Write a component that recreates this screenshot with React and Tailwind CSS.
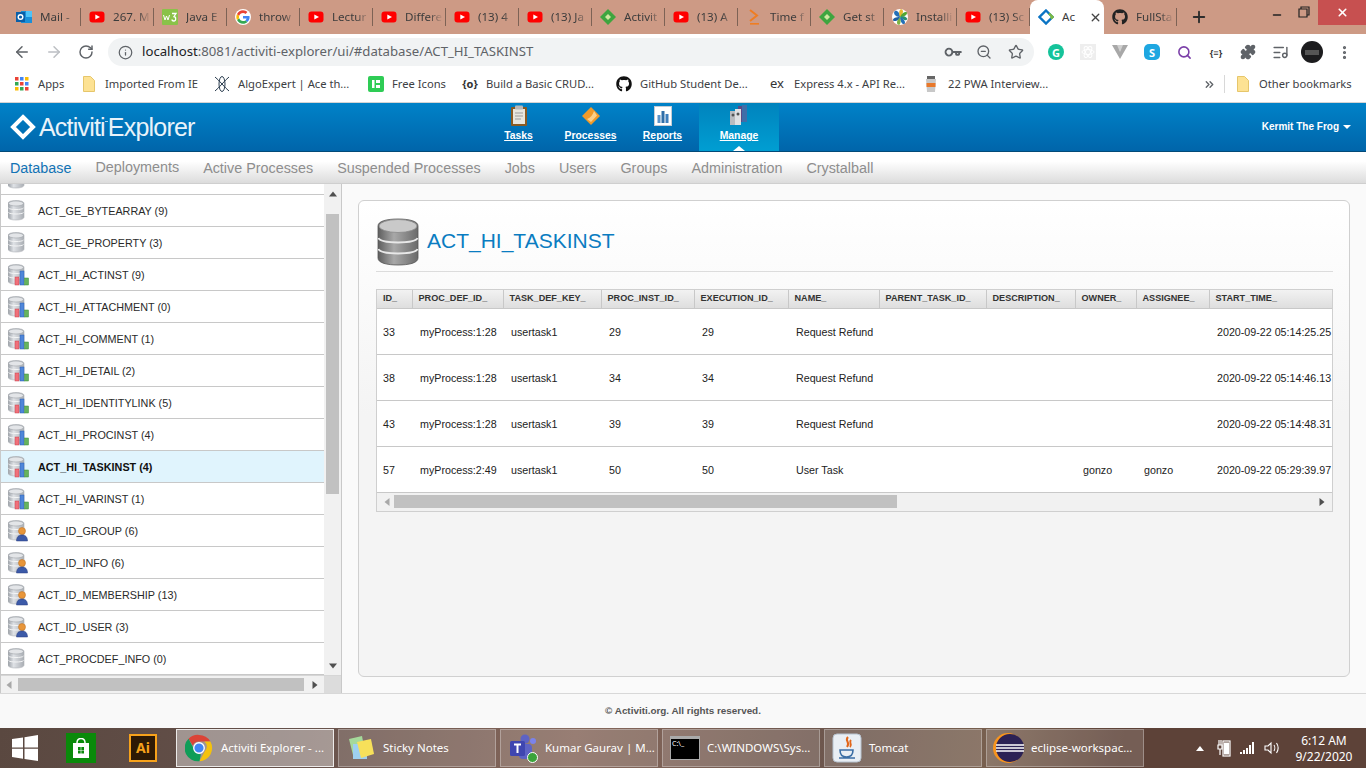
import React from 'react';
import { ArrowLeft, ArrowRight, RotateCw, Info, Key, ZoomOut, Star, Plus, X, Minus, EllipsisVertical, ListMusic, Search, ChevronsRight, Puzzle } from 'lucide-react';
import { FaGithub } from 'react-icons/fa';

const UI = 'font-["Noto_Sans",sans-serif]';

const YT = () => (
  <svg width="16" height="16" viewBox="0 0 16 16"><rect x="0.5" y="2.5" width="15" height="11" rx="3" fill="#f00" /><path d="M6.3 5.4 11 8l-4.700 2.600z" fill="#fff" /></svg>
);
const Outlook = () => (
  <svg width="16" height="16" viewBox="0 0 16 16"><rect x="5" y="2" width="11" height="12" fill="#1a8fd8" /><rect x="10" y="2" width="6" height="6" fill="#4fc3f7" /><rect x="0" y="3" width="9" height="10" fill="#0a5fa8" /><circle cx="4.500" cy="8" r="2.300" fill="none" stroke="#fff" strokeWidth="1.400" /></svg>
);
const W3 = () => (
  <svg width="16" height="16" viewBox="0 0 16 16"><rect width="16" height="16" rx="1" fill="#8ac249" /><path d="M1.500 6 3 11l1.500-4L6 11l1.500-5" fill="none" stroke="#fff" strokeWidth="1" /><path d="M10 4.500h4l-2 3c2 0 2.500 4.500-.2 4.500-1 0-1.800-.5-2-1.500" fill="none" stroke="#fff" strokeWidth="1.300" /></svg>
);
const GoogleG = () => (
  <svg width="16" height="16" viewBox="0 0 16 16">
    <circle cx="8" cy="8" r="8" fill="#fff" />
    <path d="M14.600 8.200c0-.5-.1-.9-.2-1.300H8v2.500h3.600c-.2.800-.6 1.500-1.300 2l2.100 1.600c1.300-1.100 2.200-2.800 2.200-4.800z" fill="#4285f4" />
    <path d="M8 14.800c1.800 0 3.400-.6 4.400-1.800l-2.100-1.600c-.6.400-1.300.7-2.300.7-1.800 0-3.300-1.200-3.800-2.800L2 10.900c1.100 2.300 3.400 3.900 6 3.900z" fill="#34a853" />
    <path d="M4.200 9.300c-.3-.8-.3-1.800 0-2.600L2 5.100c-.9 1.800-.9 4 0 5.800z" fill="#fbbc05" />
    <path d="M8 3.900c1 0 1.900.3 2.500 1l1.900-1.900C11.300 2 9.800 1.200 8 1.200c-2.600 0-4.900 1.600-6 3.900l2.200 1.600C4.700 5.100 6.200 3.900 8 3.900z" fill="#ea4335" />
  </svg>
);
const GreenDiamond = () => (
  <svg width="16" height="16" viewBox="0 0 16 16"><path d="M8 0 16 8l-5 5-3 3-8-8z" fill="#3fa53f" /><path d="M5 8l3-3 3 3-3 3z" fill="#cfe8a0" /></svg>
);
const TimeIcon = () => (
  <svg width="16" height="16" viewBox="0 0 16 16"><path d="M4 1l7 5.500L4 12" fill="none" stroke="#ef7d22" strokeWidth="2" /><rect x="4" y="14" width="9" height="1.600" fill="#ef7d22" /></svg>
);
const Pinwheel = () => (
  <svg width="16" height="16" viewBox="0 0 16 16"><circle cx="8" cy="8" r="8" fill="#fff" /><path d="M8 8C8 4 5 1 3 2 1 3 2 8 8 8z" fill="#2470b8" /><path d="M8 8c3-3 4-6 2-7.500S6 3 8 8z" fill="#e9b72e" /><path d="M8 8c4 0 7-2 7-4s-5-1-7 4z" fill="#55a630" /><path d="M8 8c3 3 6 4 7 2.500S12 6 8 8z" fill="#2b8f70" /><path d="M8 8c0 4 2 7.500 4 7S13 10 8 8z" fill="#2470b8" /><path d="M8 8c-3 3-4 6-2 7.500S9.500 13 8 8z" fill="#7cb342" /><path d="M8 8c-4 0-7 1-7 3s5 1.500 7-3z" fill="#1d5fa3" /></svg>
);
const BlueDiamond = () => (
  <svg width="16" height="16" viewBox="0 0 16 16"><path d="M8 1.500 14.500 8 8 14.500 1.500 8z" fill="none" stroke="#0b74c4" strokeWidth="2.400" /><path d="M11 4.500 14.500 8 12.800 9.700" fill="none" stroke="#7dbb42" strokeWidth="2.400" /></svg>
);
const Chrome = ({ s = 28 }) => (
  <svg width={s} height={s} viewBox="0 0 32 32">
    <path d="M16 1a15 15 0 0 1 13 7.500H16a7.500 7.500 0 0 0-7 4.800L4 5.500A15 15 0 0 1 16 1z" fill="#db4437" />
    <path d="M29 8.500A15 15 0 0 1 16.500 31l6-11A7.500 7.500 0 0 0 22 8.500z" fill="#f4c20d" />
    <path d="M16.500 31A15 15 0 0 1 4 5.500l6.200 11.500a7.500 7.500 0 0 0 8 6z" fill="#0f9d58" />
    <circle cx="16" cy="16" r="6" fill="#4285f4" stroke="#fff" strokeWidth="1.500" />
  </svg>
);

function Tab({ icon, text }) {
  return (
    <div className="w-[73px] h-[18px] shrink-0 flex items-center gap-2 pl-2 border-r border-[#7d6255]">
      <span className="w-4 h-4 shrink-0">{icon}</span>
      <span className="flex-1 overflow-hidden whitespace-nowrap text-[11.6px] text-[#3c3c3c] pr-1 [mask-image:linear-gradient(to_right,black_60%,transparent_95%)]">{text}</span>
    </div>
  );
}

const Folder = () => (
  <svg width="12" height="16" viewBox="0 0 12 16"><path d="M.5.500h7l4 4v11H.5z" fill="#fde293" stroke="#e6c66b" /></svg>
);

function BM({ icon, text, ml, w }) {
  return (
    <div className={`flex items-center shrink-0 ${ml} ${w}`}>
      {icon}
      <span className="text-[11.2px] text-[#3c4043] whitespace-nowrap">{text}</span>
    </div>
  );
}

function ExtSlot({ children }) {
  return <div className="w-8 h-8 flex items-center justify-center shrink-0">{children}</div>;
}

function Db({ kind = 'plain' }) {
  return (
    <svg width="26" height="22" viewBox="0 0 26 22" className="shrink-0">
      <defs>
        <linearGradient id="dbg" x1="0" x2="1" y1="0" y2="0">
          <stop offset="0" stopColor="#9a9fa6" /><stop offset=".35" stopColor="#dfe2e6" /><stop offset="1" stopColor="#a9adb3" />
        </linearGradient>
      </defs>
      <path d="M0 3.500C0 1.500 3.500.5 8 .5s8 1 8 3V17c0 2-3.500 3-8 3s-8-1-8-3z" fill="url(#dbg)" stroke="#aeb2b7" strokeWidth=".6" />
      <ellipse cx="8" cy="3.500" rx="7.400" ry="2.500" fill="#e3e5e8" stroke="#a0a4aa" strokeWidth=".6" />
      <path d="M.5 8c1 2 14 2 15 0M.5 12.500c1 2 14 2 15 0" fill="none" stroke="#f4f5f6" strokeWidth="1" />
      {kind === 'chart' && (
        <g>
          <rect x="7" y="13" width="4" height="8" fill="#f0707a" stroke="#c8414c" strokeWidth=".5" />
          <rect x="12" y="7" width="4" height="14" fill="#4f86d9" stroke="#2a5db0" strokeWidth=".5" />
          <rect x="16.500" y="14" width="4" height="7" fill="#66b35e" stroke="#3a8a36" strokeWidth=".5" />
        </g>
      )}
      {kind === 'user' && (
        <g>
          <circle cx="14" cy="11" r="3.500" fill="#e8963a" stroke="#b86d1e" strokeWidth=".5" />
          <path d="M8.500 21c0-4 2-6 5.500-6s5.500 2 5.500 6z" fill="#3c5aa8" stroke="#2a3f80" strokeWidth=".5" />
        </g>
      )}
    </svg>
  );
}

const rows = [
  ['', 'plain'],
  ['ACT_GE_BYTEARRAY (9)', 'plain'],
  ['ACT_GE_PROPERTY (3)', 'plain'],
  ['ACT_HI_ACTINST (9)', 'chart'],
  ['ACT_HI_ATTACHMENT (0)', 'chart'],
  ['ACT_HI_COMMENT (1)', 'chart'],
  ['ACT_HI_DETAIL (2)', 'chart'],
  ['ACT_HI_IDENTITYLINK (5)', 'chart'],
  ['ACT_HI_PROCINST (4)', 'chart'],
  ['ACT_HI_TASKINST (4)', 'chart', true],
  ['ACT_HI_VARINST (1)', 'chart'],
  ['ACT_ID_GROUP (6)', 'user'],
  ['ACT_ID_INFO (6)', 'user'],
  ['ACT_ID_MEMBERSHIP (13)', 'user'],
  ['ACT_ID_USER (3)', 'user'],
  ['ACT_PROCDEF_INFO (0)', 'plain'],
];

const cols = [
  ['ID_', 35], ['PROC_DEF_ID_', 91], ['TASK_DEF_KEY_', 98], ['PROC_INST_ID_', 93], ['EXECUTION_ID_', 94],
  ['NAME_', 91], ['PARENT_TASK_ID_', 107], ['DESCRIPTION_', 89], ['OWNER_', 61], ['ASSIGNEE_', 73], ['START_TIME_', 123],
];
const data = [
  ['33', 'myProcess:1:28', 'usertask1', '29', '29', 'Request Refund', '', '', '', '', '2020-09-22 05:14:25.25'],
  ['38', 'myProcess:1:28', 'usertask1', '34', '34', 'Request Refund', '', '', '', '', '2020-09-22 05:14:46.13'],
  ['43', 'myProcess:1:28', 'usertask1', '39', '39', 'Request Refund', '', '', '', '', '2020-09-22 05:14:48.31'],
  ['57', 'myProcess:2:49', 'usertask1', '50', '50', 'User Task', '', '', 'gonzo', 'gonzo', '2020-09-22 05:29:39.97'],
];

const Tri = ({ dir, c = '#505050' }) => {
  const d = { up: 'M0 5 4 0l4 5z', down: 'M0 0h8L4 5z', left: 'M5 0v8L0 4z', right: 'M0 0v8l5-4z' }[dir];
  return <svg width="8" height="8" viewBox="0 0 8 8"><path d={d} fill={c} transform={dir === 'up' || dir === 'down' ? 'translate(0 1.500)' : 'translate(1.500 0)'} /></svg>;
};

function NavItem({ icon, label, active }) {
  return (
    <div className={`relative flex flex-col items-center h-full shrink-0 ${active ? 'w-[80px] bg-[linear-gradient(#0083bd,#009ed2)]' : 'w-[71px] mr-px'}`}>
      <div className="h-[22px] mt-[2px] flex items-center justify-center">{icon}</div>
      <span className="text-[10.4px] leading-[18px] font-bold text-white underline">{label}</span>
      {active && <span className="absolute bottom-0 left-1/2 -ml-[6px] w-0 h-0 border-x-[6px] border-x-transparent border-b-[5px] border-b-white" />}
    </div>
  );
}

const Clipboard = () => (
  <svg width="18" height="22" viewBox="0 0 18 22"><rect x="1" y="2" width="16" height="19" rx="1" fill="#8a5a22" /><rect x="3" y="4" width="12" height="15" fill="#e8e6de" /><rect x="5" y="0.500" width="8" height="4" rx="1" fill="#b9b9b9" /><path d="M5 8h8M5 11h8M5 14h6" stroke="#9c9c9c" strokeWidth="1" /></svg>
);
const OrangeD = () => (
  <svg width="20" height="20" viewBox="0 0 20 20"><path d="M10 1 19 10l-9 9-9-9z" fill="#f09a2a" /><path d="M6 13C9 12 12 9 13 5l3 4.500L10 16z" fill="#fbd08a" /></svg>
);
const ChartI = () => (
  <svg width="18" height="20" viewBox="0 0 18 20"><rect x=".5" y=".5" width="17" height="19" fill="#fff" stroke="#c5ccd4" /><rect x="3.500" y="9" width="3" height="8" fill="#5a93c9" /><rect x="7.500" y="5" width="3" height="12" fill="#2f6ea8" /><rect x="11.500" y="8" width="3" height="9" fill="#3d7fbd" /></svg>
);
const Books = () => (
  <svg width="20" height="22" viewBox="0 0 20 22"><rect x="9" y="1" width="8" height="16" fill="#5a4a86" /><rect x="13" y="0" width="5" height="17" fill="#3f6ea8" /><rect x="1" y="6" width="6" height="14" fill="#b9bcc0" /><rect x="6" y="4" width="6" height="16" fill="#dfe1e3" /><circle cx="9" cy="9" r="1.500" fill="#555" /><circle cx="4" cy="10" r="1.500" fill="#555" /></svg>
);

function TaskBtn({ icon, text, active }) {
  return (
    <div className={`w-[158px] h-[38px] shrink-0 flex items-center overflow-hidden border ${active ? 'bg-white/40 border-white/80' : 'bg-white/15 border-white/30'}`}>
      <span className="w-[44px] shrink-0 flex justify-center">{icon}</span>
      <span className="text-[11.5px] text-white whitespace-nowrap">{text}</span>
    </div>
  );
}

export default function App() {
  return (
    <div className="w-[1366px] h-[768px] overflow-hidden flex flex-col bg-white font-['Liberation_Sans',Arial,sans-serif]">
      {/* Tab strip */}
      <div className={`relative h-[34px] shrink-0 bg-[#cd9a85] flex items-center pl-2 ${UI}`}>
        <Tab icon={<Outlook />} text="Mail -" />
        <Tab icon={<YT />} text="267. M" />
        <Tab icon={<W3 />} text="Java E" />
        <Tab icon={<GoogleG />} text="throw" />
        <Tab icon={<YT />} text="Lectur" />
        <Tab icon={<YT />} text="Differe" />
        <Tab icon={<YT />} text="(13) 4" />
        <Tab icon={<YT />} text="(13) Ja" />
        <Tab icon={<GreenDiamond />} text="Activit" />
        <Tab icon={<YT />} text="(13) A" />
        <Tab icon={<TimeIcon />} text="Time f" />
        <Tab icon={<GreenDiamond />} text="Get st" />
        <Tab icon={<Pinwheel />} text="Installi" />
        <Tab icon={<YT />} text="(13) Sc" />
        <div className="w-[74px] h-[34px] shrink-0 bg-white rounded-t-lg flex items-center pl-2 gap-2">
          <BlueDiamond />
          <span className="text-[11.6px] text-[#3c3c3c] w-[18px] overflow-hidden">Ac</span>
          <X size={13} strokeWidth={2.500} className="text-[#444] ml-[1px]" />
        </div>
        <Tab icon={<FaGithub size={16} color="#222" />} text="FullSta" />
        <Plus size={18} strokeWidth={2.500} className="ml-[13px] text-[#2d2d2d]" />
        <div className="absolute right-0 top-0 flex items-start h-[25px]">
          <Minus size={12} strokeWidth={3} className="mr-[15px] mt-[9px] text-[#222]" />
          <svg width="12" height="12" viewBox="0 0 12 12" className="mr-[8px] mt-[6px]"><path d="M3 3V1h8v8H9M1 3h8v8H1z" fill="none" stroke="#222" strokeWidth="1.200" /></svg>
          <div className="w-[48px] h-[25px] bg-[#c75050] flex items-center justify-center"><X size={13} strokeWidth={3} className="text-white" /></div>
        </div>
      </div>

      {/* Toolbar */}
      <div className={`h-[36px] shrink-0 flex items-center pl-[6px] ${UI}`}>
        <ExtSlot><ArrowLeft size={18} className="text-[#5f6368]" /></ExtSlot>
        <ExtSlot><ArrowRight size={18} className="text-[#bcbfc3]" /></ExtSlot>
        <ExtSlot><RotateCw size={16} strokeWidth={2.200} className="text-[#5f6368]" /></ExtSlot>
        <div className="ml-[6px] w-[926px] h-[28px] rounded-full bg-[#f1f3f4] flex items-center pl-[10px] pr-[2px]">
          <Info size={15} strokeWidth={2} className="text-[#5f6368]" />
          <span className="ml-[9px] text-[13.2px] text-[#5f6368] whitespace-nowrap"><span className="text-[#202124]">localhost</span>:8081/activiti-explorer/ui/#database/ACT_HI_TASKINST</span>
          <div className="ml-auto flex">
            <ExtSlot><Key size={15} strokeWidth={3} className="text-[#5f6368] rotate-45" /></ExtSlot>
            <ExtSlot><ZoomOut size={16} className="text-[#5f6368]" /></ExtSlot>
            <ExtSlot><Star size={16} strokeWidth={2} className="text-[#5f6368]" /></ExtSlot>
          </div>
        </div>
        <div className="ml-[6px] flex">
          <ExtSlot><span className="w-4 h-4 rounded-full bg-[#15c39a] flex items-center justify-center text-white text-[11px] font-bold leading-none">G</span></ExtSlot>
          <ExtSlot><span className="w-4 h-4 bg-[#eeeeee] flex items-center justify-center"><svg width="14" height="14" viewBox="0 0 14 14" fill="none" stroke="#fff" strokeWidth="1"><ellipse cx="7" cy="7" rx="6" ry="2.500" /><ellipse cx="7" cy="7" rx="6" ry="2.500" transform="rotate(60 7 7)" /><ellipse cx="7" cy="7" rx="6" ry="2.500" transform="rotate(120 7 7)" /></svg></span></ExtSlot>
          <ExtSlot><svg width="16" height="14" viewBox="0 0 16 14"><path d="M0 0h6l2 6 2-6h6L8 14z" fill="#a8a8a8" /><path d="M5 0h6L8 7z" fill="#d0d0d0" /></svg></ExtSlot>
          <ExtSlot><span className="w-4 h-4 rounded-[5px] bg-[#1ea7e1] flex items-center justify-center text-white text-[11px] font-bold leading-none">S</span></ExtSlot>
          <ExtSlot><Search size={15} strokeWidth={2.500} className="text-[#7b3fa8]" /></ExtSlot>
          <ExtSlot><span className="text-[9px] font-bold text-[#333] leading-none whitespace-nowrap">{'{≡}'}</span></ExtSlot>
          <ExtSlot><Puzzle size={16} fill="currentColor" className="text-[#5f6368]" /></ExtSlot>
          <ExtSlot><ListMusic size={17} className="text-[#5f6368]" /></ExtSlot>
          <ExtSlot><span className="w-[22px] h-[22px] rounded-full bg-[#1c1c1e] flex items-center justify-center"><span className="w-[14px] h-[5px] bg-[#555]" /></span></ExtSlot>
          <ExtSlot><EllipsisVertical size={17} strokeWidth={2.500} className="text-[#5f6368]" /></ExtSlot>
        </div>
      </div>

      {/* Bookmarks */}
      <div className={`h-[33px] shrink-0 flex items-center pb-[4px] border-b border-[#d4d4d4] ${UI}`}>
        <BM ml="ml-[15px]" w="w-[68px]" text="Apps" icon={
          <svg width="14" height="14" viewBox="0 0 14 14" className="mr-[9px]">
            {[0, 5, 10].flatMap((y, i) => [0, 5, 10].map((x, j) => (
              <rect key={`${i}${j}`} x={x} y={y} width="3.500" height="3.500" fill={['#ea4335', '#4285f4', '#fbbc05', '#34a853', '#ea4335', '#4285f4', '#fbbc05', '#34a853', '#ea4335'][i * 3 + j]} />
            )))}
          </svg>
        } />
        <BM w="w-[131px]" text="Imported From IE" icon={<span className="mr-[10px] flex"><Folder /></span>} />
        <BM w="w-[154px]" text="AlgoExpert | Ace th..." icon={
          <svg width="16" height="18" viewBox="0 0 16 18" className="mr-2" fill="none" stroke="#2c3e50" strokeWidth="1"><path d="M1 2c4 3 10 11 14 14M15 2C11 5 5 13 1 16" /><ellipse cx="8" cy="9" rx="3" ry="7.500" /></svg>
        } />
        <BM w="w-[94px]" text="Free Icons" icon={
          <span className="w-4 h-4 mr-2 bg-[#2ecc55] rounded-[2px] flex items-center justify-center"><svg width="10" height="10" viewBox="0 0 10 10"><path d="M1 1h2.500v8H1zM5 1h4v3H5zM5 6h4v3H5z" fill="#fff" /></svg></span>
        } />
        <BM w="w-[154px]" text="Build a Basic CRUD..." icon={
          <span className="w-4 mr-2 text-[11px] text-[#333] font-bold whitespace-nowrap flex justify-center">{'{o}'}</span>
        } />
        <BM w="w-[154px]" text="GitHub Student De..." icon={<FaGithub size={16} color="#111" className="mr-2" />} />
        <BM w="w-[155px]" text="Express 4.x - API Re..." icon={<span className="w-4 mr-2 text-[13px] text-[#333] leading-none">ex</span>} />
        <BM w="w-[278px]" text="22 PWA Interview..." icon={
          <svg width="12" height="16" viewBox="0 0 12 16" className="mr-[11px]"><rect x="2" y="0" width="8" height="3" fill="#666" /><path d="M1 3h10l-1 13H2z" fill="#c8c8c8" /><rect x="1.500" y="7" width="9" height="4" fill="#e8782a" /></svg>
        } />
        <ChevronsRight size={13} strokeWidth={2.500} className="text-[#5f6368]" />
        <span className="ml-[8px] w-px h-[18px] bg-[#d8d8d8]" />
        <BM ml="ml-[12px]" text="Other bookmarks" icon={<span className="mr-[10px] flex"><Folder /></span>} />
      </div>

      {/* App header */}
      <div className="h-[49px] shrink-0 bg-[linear-gradient(#0082c8,#0065aa)] border-b border-[#024a78] flex items-stretch">
        <div className="w-[483px] shrink-0 flex items-center pl-[10px]">
          <svg width="26" height="26" viewBox="0 0 26 26" className="shrink-0"><path d="M13 3 23 13 13 23 3 13z" fill="none" stroke="#fff" strokeWidth="4" /></svg>
          <span className="ml-[3px] text-[25px] leading-none text-[#e8f3fa] tracking-[-0.8px] whitespace-nowrap">Activiti<span className="inline-block w-[3px] h-px bg-white/70 align-[14px]" />Explorer</span>
        </div>
        <NavItem icon={<Clipboard />} label="Tasks" />
        <NavItem icon={<OrangeD />} label="Processes" />
        <NavItem icon={<ChartI />} label="Reports" />
        <NavItem icon={<Books />} label="Manage" active />
        <div className="flex-1 flex items-center justify-end pr-[15px] pb-[1px]">
          <span className="text-[10px] font-bold text-white">Kermit The Frog</span>
          <span className="ml-[4px] w-0 h-0 border-x-[4px] border-x-transparent border-t-[4px] border-t-white" />
        </div>
      </div>

      {/* Sub nav */}
      <div className="h-[32px] shrink-0 bg-[linear-gradient(#ffffff_30%,#dcdcdc)] border-b border-[#cfcfcf] flex items-center pl-[10px] pt-[2px] gap-[24px] text-[14.35px] text-[#8e8e8e]">
        <span className="text-[#1273b5]">Database</span>
        <span className="-mt-[2px]">Deployments</span>
        <span>Active Processes</span>
        <span>Suspended Processes</span>
        <span>Jobs</span>
        <span>Users</span>
        <span>Groups</span>
        <span>Administration</span>
        <span>Crystalball</span>
      </div>

      {/* Main */}
      <div className="flex-1 min-h-0 flex bg-[#fafafa] border-b border-[#d8d8d8]">
        {/* Sidebar */}
        <div className="w-[342px] shrink-0 flex flex-col bg-white border-x border-[#c9c9c9] overflow-hidden">
          <div className="flex-1 min-h-0 flex">
            <div className="w-[323px] shrink-0 overflow-hidden">
              <div className="-mt-[21px]">
                {rows.map(([n, k, sel], i) => (
                  <div key={i} className={`h-[32px] flex items-center border-b border-[#c8c8c8] pl-[7px] ${sel ? 'bg-[#e0f4fd] font-bold text-[#111]' : 'text-[#2a2a2a]'}`}>
                    <span className="w-[30px] shrink-0 flex"><Db kind={k} /></span>
                    <span className="text-[10.8px] pt-[1px] whitespace-nowrap">{n}</span>
                  </div>
                ))}
              </div>
            </div>
            <div className="flex-1 bg-[#f1f1f1] flex flex-col items-center pt-[6px] pb-[2px]">
              <Tri dir="up" />
              <div className="w-[13px] h-[280px] mt-[16px] bg-[#c1c1c1]" />
              <div className="mt-auto mb-[3px]"><Tri dir="down" /></div>
            </div>
          </div>
          <div className="h-[18px] shrink-0 flex bg-[#f1f1f1] border-t border-[#d6d6d6]">
            <div className="w-[323px] shrink-0 flex items-center pl-[4px]">
              <Tri dir="left" c="#a8a8a8" />
              <div className="ml-[5px] w-[286px] h-[13px] bg-[#c1c1c1]" />
              <div className="ml-[7px]"><Tri dir="right" /></div>
            </div>
            <div className="flex-1 bg-[#dcdcdc]" />
          </div>
        </div>

        {/* Content */}
        <div className="flex-1 min-w-0 p-[16px] bg-[#fafafa]">
          <div className="h-full rounded-md border border-[#d0d0d0] bg-[linear-gradient(#ffffff,#f4f4f4_45%)] pt-[17px] pl-[17px] pr-[16px]">
            <div className="h-[54px] flex items-start border-b border-[#dcdcdc]">
              <svg width="42" height="48" viewBox="0 0 42 48" className="shrink-0 ml-[1px]">
                <defs>
                  <linearGradient id="big" x1="0" x2="1" y1="0" y2="0">
                    <stop offset="0" stopColor="#5e5e5e" /><stop offset=".4" stopColor="#a8a8a8" /><stop offset="1" stopColor="#6a6a6a" />
                  </linearGradient>
                </defs>
                <path d="M1 8C1 3 10 1 21 1s20 2 20 7v32c0 5-9 7-20 7S1 45 1 40z" fill="url(#big)" stroke="#555" strokeWidth=".8" />
                <ellipse cx="21" cy="8" rx="19" ry="6.500" fill="#c9c9c9" stroke="#8a8a8a" strokeWidth=".8" />
                <path d="M1.500 20c2 6 37 6 39 0M1.500 31c2 6 37 6 39 0" fill="none" stroke="#e8e8e8" strokeWidth="1.800" />
              </svg>
              <span className="ml-[8px] mt-[8px] text-[21px] leading-[30px] text-[#0a7cc1]">ACT_HI_TASKINST</span>
            </div>
            <div className="mt-[17px] border border-[#cfcfcf] overflow-hidden bg-white">
              <table className="table-fixed border-collapse w-[955px]">
                <colgroup>{cols.map(([h, w]) => <col key={h} style={{ width: w }} />)}</colgroup>
                <thead>
                  <tr className="h-[18px] bg-[linear-gradient(#f2f2f2,#dedede)]">
                    {cols.map(([h]) => (
                      <th key={h} className="border-r last:border-r-0 border-b border-[#c8c8c8] pl-[6px] pt-[1px] text-left text-[9.1px] font-bold text-[#333] whitespace-nowrap overflow-hidden">{h}</th>
                    ))}
                  </tr>
                </thead>
                <tbody>
                  {data.map((r) => (
                    <tr key={r[0]} className="h-[46px] border-b border-[#c8c8c8]">
                      {r.map((c, i) => (
                        <td key={i} className={`${i === 0 ? 'pl-[6px]' : 'pl-[8px]'} pt-[2px] text-[10.7px] text-[#222] whitespace-nowrap overflow-hidden`}>{c}</td>
                      ))}
                    </tr>
                  ))}
                </tbody>
              </table>
              <div className="h-[18px] bg-[#f1f1f1] flex items-center pl-[6px] pr-[6px]">
                <Tri dir="left" c="#a8a8a8" />
                <div className="ml-[3px] w-[503px] h-[13px] bg-[#c1c1c1]" />
                <div className="ml-auto"><Tri dir="right" /></div>
              </div>
            </div>
          </div>
        </div>
      </div>

      {/* Footer */}
      <div className="h-[34px] shrink-0 bg-[#f9f9f9] flex items-center justify-center text-[9.9px] font-bold text-[#555]">© Activiti.org. All rights reserved.</div>

      {/* Taskbar */}
      <div className={`h-[40px] shrink-0 flex items-center bg-[linear-gradient(100deg,#5a4840_0%,#64504a_20%,#86685c_42%,#6b554c_62%,#78604f_72%,#5d4238_82%,#5d4238_100%)] ${UI}`}>
        <svg width="26" height="26" viewBox="0 0 26 26" className="ml-[12px] shrink-0"><path d="M0 4 11 2.500V12.500H0zM12.500 2.300 26 0V12.500H12.500zM0 13.800H11V23.700L0 22zM12.500 13.800H26V26L12.500 24z" fill="#fff" /></svg>
        <span className="ml-[28px] w-[30px] h-[30px] bg-[#0a8a0a] flex items-center justify-center shrink-0">
          <svg width="18" height="20" viewBox="0 0 18 20"><path d="M1 5h16v15H1z" fill="#fff" /><path d="M5 5c0-6 8-6 8 0" fill="none" stroke="#fff" strokeWidth="1.500" /><path d="M6 9h2.700v3H6zM9.300 9H12v3H9.300zM6 12.600h2.700v3H6zM9.300 12.600H12v3H9.300z" fill="#0a8a0a" /></svg>
        </span>
        <span className="ml-[33px] w-[28px] h-[28px] bg-[#2e1a05] border-2 border-[#f7a21b] flex items-center justify-center text-[#f7a21b] text-[14px] font-bold leading-none shrink-0">Ai</span>
        <div className="ml-[19px] flex gap-[4px]">
          <TaskBtn active icon={<Chrome />} text="Activiti Explorer - ..." />
          <TaskBtn text="Sticky Notes" icon={
            <svg width="30" height="30" viewBox="0 0 30 30"><path d="M3 6 16 3l3 16-12 3z" fill="#a5d99a" /><path d="M7 11h14v15H7z" fill="#9ed0f0" /><path d="M11 9l14-3 3 15-13 4z" fill="#f7e05a" /></svg>
          } />
          <TaskBtn text="Kumar Gaurav | M..." icon={
            <span className="relative w-[30px] h-[30px] block">
              <svg width="30" height="30" viewBox="0 0 30 30"><circle cx="17" cy="6" r="4.500" fill="#5d63c4" /><circle cx="25" cy="8" r="3" fill="#7b83eb" /><rect x="11" y="11" width="13" height="15" rx="4" fill="#5d63c4" /><rect x="2" y="8" width="15" height="15" rx="1.500" fill="#3f46b0" /><path d="M6 11.500h7M9.500 11.500v8.500" stroke="#fff" strokeWidth="2" /></svg>
              <span className="absolute right-0 bottom-0 w-[11px] h-[11px] rounded-full bg-[#3aa33a] border border-white" />
            </span>
          } />
          <TaskBtn text="C:\WINDOWS\Sys..." icon={
            <span className="w-[30px] h-[24px] bg-black border border-[#aaa] border-t-[3px] text-white text-[7px] leading-[10px] pl-[1px] block">C:\_</span>
          } />
          <TaskBtn text="Tomcat" icon={
            <svg width="30" height="30" viewBox="0 0 30 30"><rect x="1" y="1" width="28" height="28" rx="4" fill="#e9eef4" stroke="#b6c3d0" /><path d="M16 4c-4 4 3 5-1 10M19 7c-3 3 2 4-1 7" fill="none" stroke="#e2661a" strokeWidth="2" /><path d="M8 17h13c0 5-2 7-6.500 7S8 22 8 17zM7 25h16" fill="none" stroke="#3b6ea5" strokeWidth="1.600" /></svg>
          } />
          <TaskBtn text="eclipse-workspac..." icon={
            <svg width="32" height="32" viewBox="0 0 32 32"><circle cx="15" cy="16" r="15" fill="#f7941e" /><circle cx="17" cy="16" r="14" fill="#2c2255" /><path d="M3 13h28M3 16h28M3 19h28" stroke="#fff" strokeWidth="1.400" /></svg>
          } />
        </div>
        <div className="ml-auto flex items-center text-white">
          <span className="w-0 h-0 border-x-[4px] border-x-transparent border-b-[5px] border-b-white mr-[13px]" />
          <svg width="14" height="18" viewBox="0 0 14 18" className="mr-[9px]" fill="none" stroke="#fff" strokeWidth="1.200"><rect x="6" y="2" width="7" height="15" /><path d="M7.500 4h4v11h-4z" fill="#fff" /><path d="M2 1v5M4 1v5M1 6h4v4H1zM3 10v6" /></svg>
          <svg width="16" height="14" viewBox="0 0 16 14" className="mr-[8px]" fill="#fff"><rect x="0" y="11" width="2" height="2" /><rect x="3" y="9" width="2" height="4" /><rect x="6" y="7" width="2" height="6" /><rect x="9" y="4" width="2" height="9" /><rect x="12" y="1" width="2" height="12" /></svg>
          <svg width="16" height="16" viewBox="0 0 16 16" className="mr-[7px]" fill="none" stroke="#fff" strokeWidth="1.100"><path d="M1 6h3l3-3v10l-3-3H1z" /><path d="M10 5c1 1.500 1 4.500 0 6M12.500 3c2 3 2 7 0 10" /></svg>
          <div className="w-[74px] flex flex-col items-center text-[12px] leading-[16px] mt-[2px] mr-[5px]">
            <span>6:12 AM</span>
            <span>9/22/2020</span>
          </div>
        </div>
      </div>
    </div>
  );
}
